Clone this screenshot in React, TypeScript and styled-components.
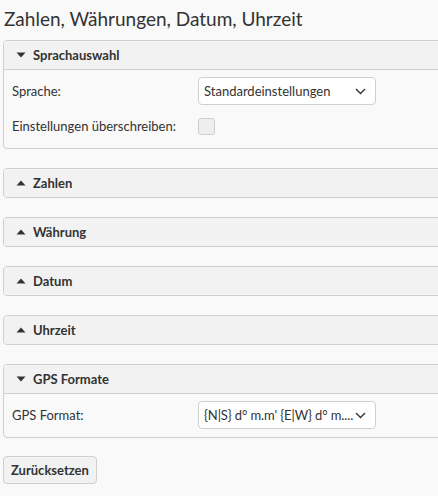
import React from "react";
import styled, { createGlobalStyle } from "styled-components";

const GlobalStyle = createGlobalStyle`
  html, body {
    margin: 0;
    padding: 0;
    background: #f9f9f9;
    overflow: hidden;
  }
  body {
    font-family: "Lato", "Noto Sans", "Liberation Sans", sans-serif;
    color: #333;
    font-size: 13px;
  }
`;

const Page = styled.div`
  padding: 0 0 0 3px;
  width: 450px;
`;

const Title = styled.h1`
  margin: 0;
  padding: 6px 0 0 1px;
  height: 40px;
  box-sizing: border-box;
  font-size: 19px;
  font-weight: 400;
  line-height: 26px;
  color: #333;
`;

const Panel = styled.section`
  border: 1px solid #cfcfcf;
  border-radius: 4px;
  background: #f9f9f9;
  margin-bottom: 19px;
  overflow: hidden;
`;

const PanelHeader = styled.div<{ $open: boolean }>`
  display: flex;
  align-items: center;
  gap: 7px;
  height: 28px;
  padding-left: 12px;
  background: #f2f2f2;
  border-bottom: ${(p) => (p.$open ? "1px solid #cfcfcf" : "none")};
  font-weight: 700;
  font-size: 13px;
  color: #333;
`;

const PanelBody = styled.div`
  display: grid;
  grid-template-columns: 186px 178px;
  row-gap: 7px;
  padding: 7px 0 8px 8px;
`;

const Label = styled.div`
  display: flex;
  align-items: center;
  height: 28px;
`;

const Cell = styled.div`
  display: flex;
  align-items: center;
  height: 28px;
`;

const SelectBox = styled.div`
  box-sizing: border-box;
  width: 178px;
  height: 28px;
  display: flex;
  align-items: center;
  justify-content: space-between;
  padding: 0 9px 0 5px;
  background: #fff;
  border: 1px solid #cfcfcf;
  border-radius: 4px;
  font-size: 13px;
  color: #333;
  white-space: nowrap;
`;

const SelectText = styled.span<{ $tight?: boolean }>`
  letter-spacing: ${(p) => (p.$tight ? "-0.1px" : "0")};
`;

const CheckBox = styled.div`
  box-sizing: border-box;
  width: 17px;
  height: 17px;
  border: 1px solid #cfcfcf;
  border-radius: 3px;
  background: #eeeeee;
`;

const Button = styled.button`
  box-sizing: border-box;
  height: 28px;
  padding: 0 7px;
  margin-top: -1px;
  background: #f2f2f2;
  border: 1px solid #cfcfcf;
  border-radius: 4px;
  font-family: inherit;
  font-weight: 700;
  font-size: 13px;
  color: #333;
`;

const Caret = ({ up }: { up: boolean }) => (
  <svg width="10" height="6" viewBox="0 0 10 6" style={{ flex: "none" }}>
    {up ? (
      <path d="M0.5 5.5 L5 0.5 L9.5 5.5 Z" fill="#333" />
    ) : (
      <path d="M0.5 0.5 L9.5 0.5 L5 5.5 Z" fill="#333" />
    )}
  </svg>
);

const Chevron = () => (
  <svg width="11" height="7" viewBox="0 0 11 7" style={{ flex: "none" }}>
    <path d="M1 1 L5.5 5.5 L10 1" fill="none" stroke="#333" strokeWidth="1.4" />
  </svg>
);

const Section = ({
  title,
  open,
  children,
}: {
  title: string;
  open: boolean;
  children?: React.ReactNode;
}) => (
  <Panel>
    <PanelHeader $open={open}>
      <Caret up={!open} />
      <span>{title}</span>
    </PanelHeader>
    {open && <PanelBody>{children}</PanelBody>}
  </Panel>
);

const Select = ({ value, tight }: { value: string; tight?: boolean }) => (
  <SelectBox>
    <SelectText $tight={tight}>{value}</SelectText>
    <Chevron />
  </SelectBox>
);

export default function App() {
  return (
    <Page>
      <GlobalStyle />
      <Title>Zahlen, Währungen, Datum, Uhrzeit</Title>
      <Section title="Sprachauswahl" open>
        <Label>Sprache:</Label>
        <Cell>
          <Select value="Standardeinstellungen" />
        </Cell>
        <Label>Einstellungen überschreiben:</Label>
        <Cell>
          <CheckBox />
        </Cell>
      </Section>
      <Section title="Zahlen" open={false} />
      <Section title="Währung" open={false} />
      <Section title="Datum" open={false} />
      <Section title="Uhrzeit" open={false} />
      <Section title="GPS Formate" open>
        <Label>GPS Format:</Label>
        <Cell>
          <Select value="{N|S} d° m.m' {E|W} d° m...." tight />
        </Cell>
      </Section>
      <Button>Zurücksetzen</Button>
    </Page>
  );
}
